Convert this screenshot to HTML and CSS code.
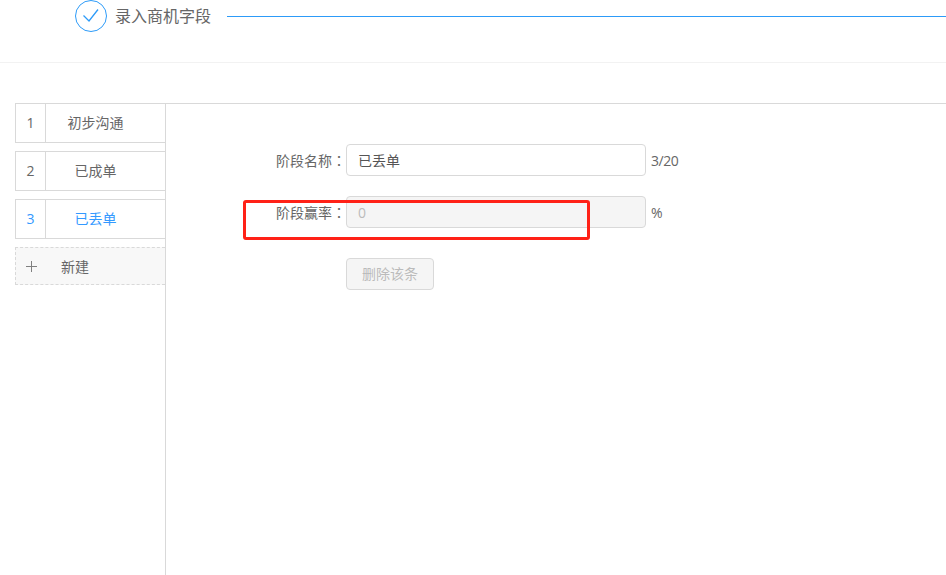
FILE: index.html
```html
<!DOCTYPE html>
<html lang="zh-CN">
<head>
<meta charset="utf-8">
<title>录入商机字段</title>
<link rel="stylesheet" href="styles.css">
</head>
<body>
<header class="steps">
  <span class="step-icon">
    <svg width="32" height="32" viewBox="0 0 32 32"><circle cx="16" cy="16" r="15.5" fill="none" stroke="#2d9bf8" stroke-width="1"/><path d="M8.5 15.5l5.5 5.5 9-11.5" fill="none" stroke="#2d9bf8" stroke-width="1.3"/></svg>
  </span>
  <span class="step-title">录入商机字段</span>
  <span class="step-line"></span>
</header>
<main class="main">
  <aside class="side">
    <div class="tab"><span class="num">1</span><span class="name">初步沟通</span></div>
    <div class="tab"><span class="num">2</span><span class="name">已成单</span></div>
    <div class="tab active"><span class="num">3</span><span class="name">已丢单</span></div>
    <div class="add"><span class="plus"></span><span class="add-text">新建</span></div>
  </aside>
  <section class="panel">
    <div class="row">
      <label class="label">阶段名称<span class="colon" lang="zh-TW">：</span></label>
      <div class="input">已丢单</div>
      <span class="suffix">3/20</span>
    </div>
    <div class="row">
      <label class="label">阶段赢率<span class="colon" lang="zh-TW">：</span></label>
      <div class="input disabled">0</div>
      <span class="suffix">%</span>
    </div>
    <div class="row">
      <span class="label"></span>
      <button class="btn" disabled>删除该条</button>
    </div>
  </section>
</main>
<div class="mark"></div>
</body>
</html>
```

FILE: styles.css
```css
* { box-sizing: border-box; }
html, body { height: 100%; }
body {
  margin: 0;
  background: #fff;
  color: #666;
  font-family: "Open Sans", "Noto Sans CJK SC", sans-serif;
  font-size: 14px;
  overflow: hidden;
  display: flex;
  flex-direction: column;
}
.steps {
  height: 63px;
  flex: none;
  border-bottom: 1px solid #f2f2f2;
  padding-left: 75px;
  display: flex;
  align-items: flex-start;
}
.step-icon { width: 32px; height: 32px; flex: none; }
.step-icon svg { display: block; }
.step-title {
  margin-left: 8px;
  font-size: 16px;
  line-height: 32px;
  color: #666;
  white-space: nowrap;
}
.step-line {
  flex: 1;
  height: 1px;
  margin: 16px 0 0 16px;
  background: #2d9bf8;
}
.main {
  flex: 1;
  margin-top: 40px;
  display: flex;
  min-height: 0;
}
.side {
  width: 166px;
  flex: none;
  padding-left: 15px;
  border-right: 1px solid #d9d9d9;
}
.tab {
  height: 40px;
  margin-bottom: 8px;
  display: flex;
  align-items: center;
  border: 1px solid #d9d9d9;
  border-right: 0;
  background: #fff;
}
.num {
  width: 30px;
  height: 100%;
  flex: none;
  border-right: 1px solid #d9d9d9;
  display: flex;
  align-items: center;
  justify-content: center;
  padding-bottom: 2px;
}
.name { flex: 1; text-align: center; padding-right: 20px; line-height: 20px; }
.active { color: #3399ff; }
.add {
  height: 38px;
  display: flex;
  align-items: center;
  border: 1px dashed #d9d9d9;
  border-right: 0;
  background: #f8f8f8;
}
.plus {
  width: 11px;
  height: 11px;
  margin-left: 10px;
  background:
    linear-gradient(#808080, #808080) center / 11px 1px no-repeat,
    linear-gradient(#808080, #808080) center / 1px 11px no-repeat;
}
.add-text { margin-left: 24px; }
.panel {
  flex: 1;
  border-top: 1px solid #d9d9d9;
  padding-top: 40px;
}
.row {
  display: flex;
  align-items: center;
  height: 32px;
  margin-bottom: 20px;
  padding-left: 80px;
}
.row:nth-child(2) { margin-bottom: 30px; }
.label {
  width: 100px;
  text-align: right;
  flex: none;
}
.colon { font-family: "Noto Sans CJK TC", sans-serif; }
.input {
  width: 300px;
  height: 32px;
  flex: none;
  border: 1px solid #d9d9d9;
  border-radius: 4px;
  padding: 0 11px;
  line-height: 31px;
  color: #555;
}
.input.disabled {
  background: #f5f5f5;
  color: #bbb;
}
.suffix { margin-left: 5px; letter-spacing: -0.5px; padding-top: 1px; }
.btn {
  width: 88px;
  height: 32px;
  padding: 0 0 2px;
  border: 1px solid #d9d9d9;
  border-radius: 4px;
  background: #f5f5f5;
  color: #bbb;
  font: inherit;
}
.mark {
  position: absolute;
  left: 243px;
  top: 200px;
  width: 347px;
  height: 40px;
  border: 3px solid #ff2117;
  border-radius: 3px;
}
```
